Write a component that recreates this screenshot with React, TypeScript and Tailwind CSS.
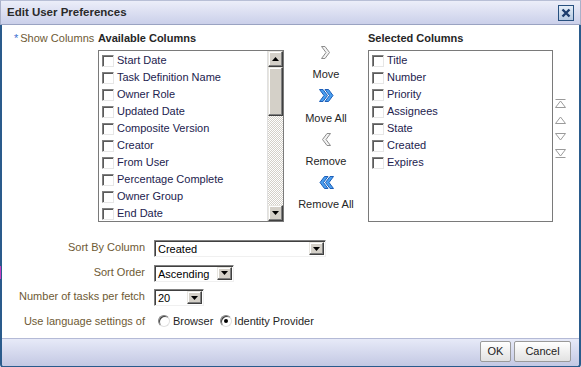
import type { ReactNode } from 'react';

const available = [
  'Start Date',
  'Task Definition Name',
  'Owner Role',
  'Updated Date',
  'Composite Version',
  'Creator',
  'From User',
  'Percentage Complete',
  'Owner Group',
  'End Date',
];

const selected = ['Title', 'Number', 'Priority', 'Assignees', 'State', 'Created', 'Expires'];

function CheckBox() {
  return (
    <span className="block h-[12px] w-[12px] shrink-0 border border-t-[#808080] border-l-[#808080] border-r-[#e6e6e6] border-b-[#e6e6e6] bg-white shadow-[inset_1px_1px_0_#5a5a5a]" />
  );
}

function ListRow({ label }: { label: string }) {
  return (
    <div className="flex h-[17px] items-center gap-[3px]">
      <CheckBox />
      <span className="whitespace-nowrap text-[#22224e]">{label}</span>
    </div>
  );
}

function Arrow({ dir }: { dir: 'up' | 'down' }) {
  return (
    <svg width="7" height="4" viewBox="0 0 7 4">
      {dir === 'up' ? <polygon points="3.5,0 7,4 0,4" fill="#000" /> : <polygon points="0,0 7,0 3.5,4" fill="#000" />}
    </svg>
  );
}

function RaisedButton({ children, className }: { children?: ReactNode; className: string }) {
  return (
    <div
      className={`flex items-center justify-center border border-t-[#e8e6e0] border-l-[#e8e6e0] border-r-[#404040] border-b-[#404040] bg-[#d4d0c8] shadow-[inset_-1px_-1px_0_#808080,inset_1px_1px_0_#ffffff] ${className}`}
    >
      {children}
    </div>
  );
}

function Select({ value, className }: { value: string; className: string }) {
  return (
    <div
      className={`flex h-[17px] items-stretch border border-t-[#808080] border-l-[#808080] border-r-[#f0f0f0] border-b-[#f0f0f0] bg-white shadow-[inset_1px_1px_0_#404040] ${className}`}
    >
      <span className="flex-1 pl-[3px] pt-[1px] leading-[14px] text-black">{value}</span>
      <RaisedButton className="my-[1px] mr-[1px] w-[15px]">
        <Arrow dir="down" />
      </RaisedButton>
    </div>
  );
}

function Radio({ checked }: { checked?: boolean }) {
  return (
    <span className="flex h-[12px] w-[12px] items-center justify-center rounded-full border border-t-[#808080] border-l-[#808080] border-r-[#e0e0e0] border-b-[#e0e0e0] bg-white shadow-[inset_1px_1px_0_#404040]">
      {checked && <span className="block h-[4px] w-[4px] rounded-full bg-black" />}
    </span>
  );
}

function Chevron({ dir, double }: { dir: 'left' | 'right'; double?: boolean }) {
  const fill = double ? '#4a9ff0' : '#f2f2f2';
  const stroke = double ? '#1e5fb8' : '#8c8c8c';
  const one = '0.5,0.5 4,0.5 8.5,6.5 4,12.5 0.5,12.5 5,6.5';
  return (
    <svg width={double ? 15 : 10} height="14" viewBox={double ? '0 0 15 14' : '0 0 10 14'}>
      <g transform={dir === 'left' ? `translate(${double ? 15 : 10},0) scale(-1,1)` : undefined}>
        <polygon points={one} fill={fill} stroke={stroke} strokeLinejoin="round" />
        {double && <polygon points={one} transform="translate(5.5,0)" fill={fill} stroke={stroke} strokeLinejoin="round" />}
      </g>
    </svg>
  );
}

function Reorder({ kind }: { kind: 'top' | 'up' | 'down' | 'bottom' }) {
  const c = '#9a9a9a';
  return (
    <svg width="11" height="9" viewBox="0 0 11 9">
      {kind === 'top' && (
        <>
          <line x1="0.5" y1="0.5" x2="10.5" y2="0.5" stroke={c} />
          <polygon points="5.5,2 10.5,8.5 0.5,8.5" fill="#fff" stroke={c} />
        </>
      )}
      {kind === 'up' && <polygon points="5.5,1 10.5,7.5 0.5,7.5" fill="#fff" stroke={c} />}
      {kind === 'down' && <polygon points="0.5,1.5 10.5,1.5 5.5,8" fill="#fff" stroke={c} />}
      {kind === 'bottom' && (
        <>
          <polygon points="0.5,0.5 10.5,0.5 5.5,7" fill="#fff" stroke={c} />
          <line x1="0.5" y1="8.5" x2="10.5" y2="8.5" stroke={c} />
        </>
      )}
    </svg>
  );
}

function FormRow({ label, children }: { label: string; children: ReactNode }) {
  return (
    <div className="flex h-[24.5px] items-start">
      <span className="w-[143px] whitespace-nowrap text-right leading-[14px] text-[#6e5a34]">{label}</span>
      <div className="ml-[9px]">{children}</div>
    </div>
  );
}

export default function App() {
  return (
    <div className="relative flex h-[367px] w-[581px] flex-col bg-white font-['Liberation_Sans',Arial,sans-serif] text-[11px]">
      {/* title bar */}
      <div className="flex h-[25px] shrink-0 items-center justify-between border-x border-t border-b border-x-[#a9b0c9] border-t-[#b8bfd6] border-b-[#9aa3c2] bg-gradient-to-b from-[#eceef9] to-[#cbd0ea] pl-[6px] pr-[6px]">
        <span className="text-[11.5px] font-bold text-[#2a2a2a]">Edit User Preferences</span>
        <span className="flex h-[16px] w-[16px] items-center justify-center border border-[#27507f] bg-gradient-to-b from-[#e4edf8] to-[#b6c9e2]">
          <svg width="10" height="10" viewBox="0 0 10 10">
            <path d="M1.5 1.5 L8.5 8.5 M8.5 1.5 L1.5 8.5" stroke="#1d3d6d" strokeWidth="2.4" />
          </svg>
        </span>
      </div>

      {/* body */}
      <div className="flex flex-1 flex-col rounded-b-[4px] border-x-2 border-b-2 border-[#2a5b8c]">
        <div className="flex pt-[6px]">
          <div className="w-[96px] shrink-0 pl-[12px] leading-[14px]">
            <span className="text-[#3b6fd1]">*</span>
            <span className="ml-[2px] text-[#6e5a34]">Show Columns</span>
          </div>

          <div className="w-[186px] shrink-0">
            <div className="font-bold leading-[14px] text-[#262626]">Available Columns</div>
            <div className="mt-[5px] flex h-[172px] border border-[#7a7a7a]">
              <div className="flex-1 overflow-hidden pl-[3px] pt-[1px]">
                {available.map((a) => (
                  <ListRow key={a} label={a} />
                ))}
              </div>
              <div className="flex w-[16px] flex-col border-l border-[#e0e0e0]">
                <RaisedButton className="h-[16px]">
                  <Arrow dir="up" />
                </RaisedButton>
                <RaisedButton className="h-[49px]" />
                <div className="flex-1 bg-[repeating-conic-gradient(#d4d0c8_0%_25%,#ffffff_0%_50%)] bg-[length:2px_2px]" />
                <RaisedButton className="h-[16px]">
                  <Arrow dir="down" />
                </RaisedButton>
              </div>
            </div>
          </div>

          <div className="flex w-[84px] shrink-0 flex-col items-center pt-[11px] text-[#262626]">
            <div className="flex h-[21.7px] items-center">
              <Chevron dir="right" />
            </div>
            <div className="flex h-[21.7px] items-center">Move</div>
            <div className="flex h-[21.7px] items-center">
              <Chevron dir="right" double />
            </div>
            <div className="flex h-[21.7px] items-center">Move All</div>
            <div className="flex h-[21.7px] items-center">
              <Chevron dir="left" />
            </div>
            <div className="flex h-[21.7px] items-center">Remove</div>
            <div className="flex h-[21.7px] items-center">
              <Chevron dir="left" double />
            </div>
            <div className="flex h-[21.7px] items-center">Remove All</div>
          </div>

          <div className="w-[185px] shrink-0">
            <div className="font-bold leading-[14px] text-[#262626]">Selected Columns</div>
            <div className="mt-[5px] h-[172px] border border-[#7a7a7a] pl-[3px] pt-[1px]">
              {selected.map((s) => (
                <ListRow key={s} label={s} />
              ))}
            </div>
          </div>

          <div className="ml-[2px] flex flex-col gap-[7.5px] pt-[68px]">
            <Reorder kind="top" />
            <Reorder kind="up" />
            <Reorder kind="down" />
            <Reorder kind="bottom" />
          </div>
        </div>

        <div className="mt-[18px] flex flex-col">
          <FormRow label="Sort By Column">
            <Select value="Created" className="w-[172px]" />
          </FormRow>
          <FormRow label="Sort Order">
            <Select value="Ascending" className="w-[80px]" />
          </FormRow>
          <FormRow label="Number of tasks per fetch">
            <Select value="20" className="w-[50px]" />
          </FormRow>
          <FormRow label="Use language settings of">
            <div className="flex items-center pl-[4px] leading-[14px] text-[#262626]">
              <Radio />
              <span className="ml-[3px]">Browser</span>
              <span className="ml-[7px]">
                <Radio checked />
              </span>
              <span className="ml-[2px]">Identity Provider</span>
            </div>
          </FormRow>
        </div>

        {/* footer */}
        <div className="mt-auto flex h-[28px] items-start justify-end gap-[3px] rounded-b-[2px] border-t border-[#b4bad6] bg-gradient-to-b from-[#e7eaf8] to-[#c3c8e3] pr-[8px] pt-[2px]">
          <button className="h-[21px] w-[31px] rounded-[2px] border border-[#9a9a9a] bg-gradient-to-b from-white to-[#e2e2e2] text-[#222]">
            OK
          </button>
          <button className="h-[21px] w-[57px] rounded-[2px] border border-[#9a9a9a] bg-gradient-to-b from-white to-[#e2e2e2] text-[#222]">
            Cancel
          </button>
        </div>
      </div>

      <div className="absolute left-0 top-[266px] h-[13px] w-[1px] bg-[#c23fc2]" />
    </div>
  );
}
